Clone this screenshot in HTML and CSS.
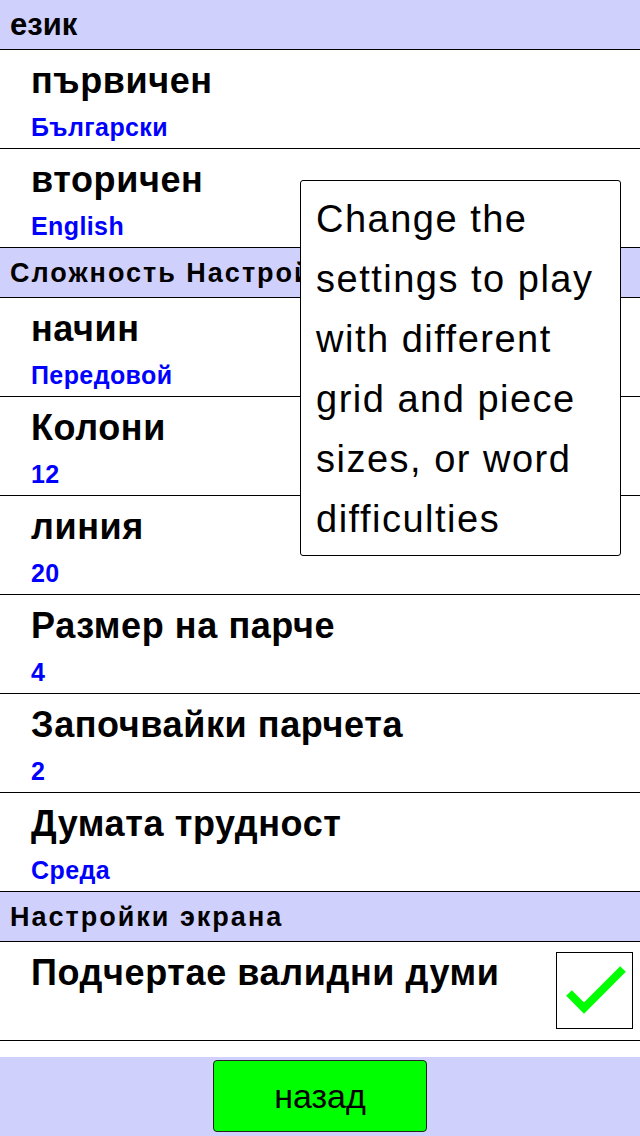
FILE: index.html
```html
<!DOCTYPE html>
<html lang="bg">
<head>
  <meta charset="UTF-8" />
  <meta name="viewport" content="width=device-width, initial-scale=1.0"/>
  <title>Настройки</title>
  <link rel="stylesheet" href="styles.css">
</head>
<body>
  <div class="screen">
    <div class="section section-lg">език</div>
    <div class="row">
      <div class="title">първичен</div>
      <div class="value">Български</div>
    </div>
    <div class="row">
      <div class="title">вторичен</div>
      <div class="value">English</div>
    </div>

    <div class="section">Сложность Настройки</div>
    <div class="row">
      <div class="title">начин</div>
      <div class="value">Передовой</div>
    </div>
    <div class="row">
      <div class="title">Колони</div>
      <div class="value">12</div>
    </div>
    <div class="row">
      <div class="title">линия</div>
      <div class="value">20</div>
    </div>
    <div class="row">
      <div class="title">Размер на парче</div>
      <div class="value">4</div>
    </div>
    <div class="row">
      <div class="title">Започвайки парчета</div>
      <div class="value">2</div>
    </div>
    <div class="row">
      <div class="title">Думата трудност</div>
      <div class="value">Среда</div>
    </div>

    <div class="section">Настройки экрана</div>
    <div class="row row-check">
      <div class="title">Подчертае валидни думи</div>
      <div class="checkbox">
        <svg width="75" height="75" viewBox="0 0 75 75">
          <polyline points="12,40 27,55 66,16" fill="none" stroke="#00ff00" stroke-width="8" stroke-linejoin="miter"/>
        </svg>
      </div>
    </div>

    <div class="spacer"></div>
    <footer class="footer">
      <button class="back-btn">назад</button>
    </footer>

    <div class="tooltip">Change the settings to play with different grid and piece sizes, or word difficulties</div>
  </div>
</body>
</html>
```

FILE: styles.css
```css
html, body {
  margin: 0;
  background: #fff;
  font-family: 'Liberation Sans', Arial, sans-serif;
  color: #000;
}
.screen {
  position: relative;
  width: 640px;
  height: 1136px;
  display: flex;
  flex-direction: column;
  overflow: hidden;
}
.section {
  height: 50px;
  box-sizing: border-box;
  padding: 1px 10px 0;
  display: flex;
  align-items: center;
  background: #d0d0fc;
  border-bottom: 1px solid #000;
  font-size: 27px;
  font-weight: bold;
  letter-spacing: 2px;
  white-space: nowrap;
}
.section-lg {
  padding: 0 10px;
  font-size: 31px;
  letter-spacing: 0;
}
.row {
  height: 99px;
  box-sizing: border-box;
  padding: 10px 31px 0;
  border-bottom: 1px solid #000;
}
.title {
  font-size: 36px;
  font-weight: bold;
  letter-spacing: 0.6px;
}
.value {
  margin-top: 11px;
  font-size: 25px;
  font-weight: bold;
  letter-spacing: 0.4px;
  color: #0000ff;
}
.row-check {
  display: flex;
  justify-content: space-between;
  align-items: flex-start;
  padding-right: 7px;
}
.checkbox {
  width: 75px;
  height: 75px;
  border: 1px solid #000;
}
.checkbox svg {
  display: block;
}
.spacer {
  flex: 1;
}
.footer {
  height: 79px;
  box-sizing: border-box;
  padding-top: 3px;
  background: #d0d0fc;
  display: flex;
  justify-content: center;
  align-items: flex-start;
}
.back-btn {
  width: 214px;
  height: 72px;
  background: #00ff00;
  border: 1px solid #222;
  border-radius: 4px;
  font-family: 'Liberation Sans', Arial, sans-serif;
  font-size: 34px;
  color: #000;
  padding: 0;
}
.tooltip {
  position: absolute;
  left: 300px;
  top: 180px;
  width: 321px;
  height: 376px;
  box-sizing: border-box;
  padding: 8px 10px 0 15px;
  background: #fff;
  border: 1px solid #000;
  border-radius: 3px;
  font-size: 38px;
  line-height: 60px;
  letter-spacing: 1.5px;
}
```
